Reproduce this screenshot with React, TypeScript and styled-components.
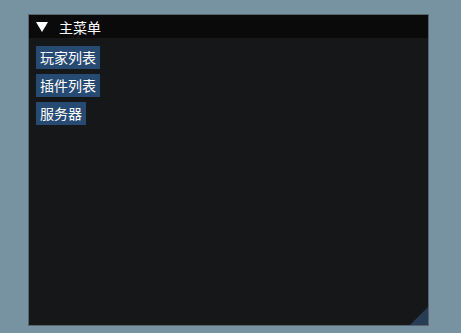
import React from "react";
import styled, { createGlobalStyle } from "styled-components";

const GlobalStyle = createGlobalStyle`
  html, body {
    margin: 0;
    background: #7793a1;
    font-family: "Noto Sans CJK SC", "Noto Sans", sans-serif;
  }
  #root {
    padding: 14px 0 0 28px;
  }
`;

const Window = styled.div`
  position: relative;
  width: 401px;
  height: 312px;
  box-sizing: border-box;
  background: #151719;
  border: 1px solid #5a6470;
  display: flex;
  flex-direction: column;
  overflow: hidden;
`;

const TitleBar = styled.div`
  height: 23px;
  background: #0a0a0a;
  display: flex;
  align-items: center;
  padding-left: 7px;
  gap: 11px;
  color: #ffffff;
  font-size: 14px;
`;

const Arrow = styled.svg`
  width: 12px;
  height: 10px;
  fill: #ffffff;
`;

const Content = styled.div`
  display: flex;
  flex-direction: column;
  align-items: flex-start;
  gap: 5px;
  padding: 8px 7px;
`;

const Button = styled.button`
  background: #274a73;
  border: none;
  border-radius: 0;
  color: #ffffff;
  font-family: inherit;
  font-size: 14px;
  line-height: 17px;
  padding: 3px 4px;
  cursor: pointer;
`;

const Grip = styled.div`
  position: absolute;
  right: 0;
  bottom: 0;
  width: 18px;
  height: 18px;
  background: #283c54;
  clip-path: polygon(100% 0, 100% 100%, 0 100%);
`;

const items = ["玩家列表", "插件列表", "服务器"];

export default function App() {
  return (
    <>
      <GlobalStyle />
      <Window>
        <TitleBar>
          <Arrow viewBox="0 0 12 10">
            <polygon points="0,0 12,0 6,10" />
          </Arrow>
          <span>主菜单</span>
        </TitleBar>
        <Content>
          {items.map((item) => (
            <Button key={item}>{item}</Button>
          ))}
        </Content>
        <Grip />
      </Window>
    </>
  );
}
